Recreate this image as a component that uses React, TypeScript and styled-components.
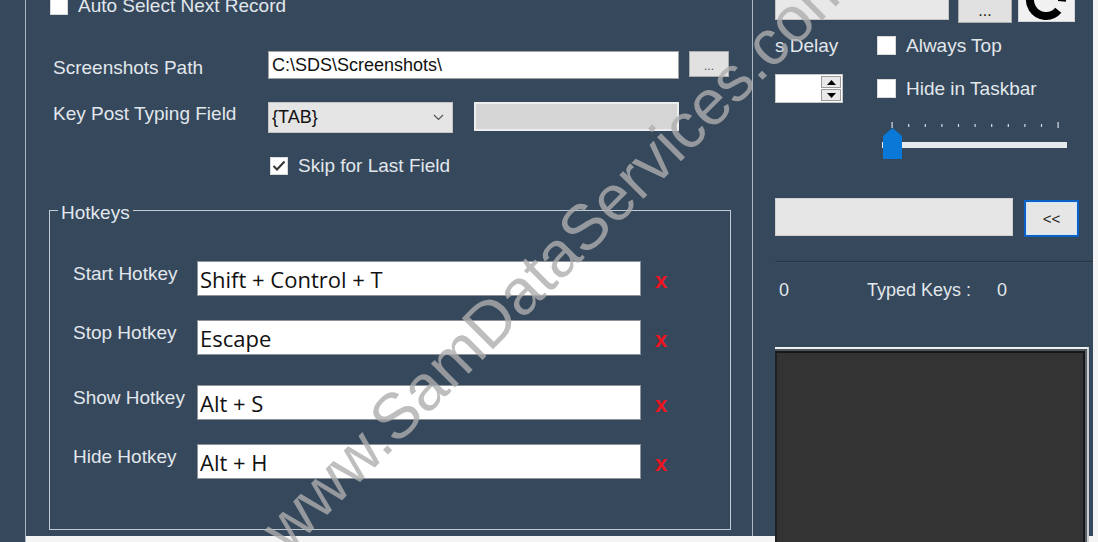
import React from 'react';
import styled, { createGlobalStyle } from 'styled-components';

const SLATE = '#35485c';
const TEXT = '#e2e7ec';

const GlobalStyle = createGlobalStyle`
  html, body { margin: 0; padding: 0; background: #f4f4f4; overflow: hidden; }
  body { width: 1098px; height: 542px; font-family: "Liberation Sans", Arial, sans-serif; }
  #root { width: 1098px; height: 542px; }
  * { box-sizing: border-box; }
`;

const Window = styled.div`
  position: relative;
  display: flex;
  align-items: flex-start;
  width: 1093px;
  height: 542px;
  overflow: hidden;
`;

const LeftStrip = styled.div`
  flex: 0 0 26px;
  height: 542px;
  background: ${SLATE};
  border-right: 1px solid #aab6c2;
`;

const LeftPanel = styled.div`
  flex: 0 0 727px;
  height: 536px;
  background: ${SLATE};
  border-right: 1px solid #aab6c2;
  display: flex;
  flex-direction: column;
  align-items: flex-start;
  & > * { flex-shrink: 0; }
`;

const RightPanel = styled.div`
  flex: 0 0 340px;
  height: 536px;
  background: ${SLATE};
  padding-left: 22px;
  display: flex;
  flex-direction: column;
  align-items: flex-start;
  & > * { flex-shrink: 0; }
`;

const Label = styled.span<{ $size?: number }>`
  font-size: ${p => p.$size ?? 19}px;
  line-height: 22px;
  color: ${TEXT};
  white-space: nowrap;
`;

const CheckRow = styled.div<{ $top: number; $left: number }>`
  display: flex;
  align-items: center;
  gap: 10px;
  height: 18px;
  margin-top: ${p => p.$top}px;
  margin-left: ${p => p.$left}px;
`;

const CheckBox = styled.span<{ $size?: number }>`
  flex: 0 0 auto;
  width: ${p => p.$size ?? 18}px;
  height: ${p => p.$size ?? 18}px;
  background: #ffffff;
  border: 1px solid #d8d8d8;
  display: flex;
  align-items: center;
  justify-content: center;
`;

const FieldRow = styled.div<{ $top: number }>`
  display: flex;
  align-items: flex-start;
  margin-top: ${p => p.$top}px;
  margin-left: 27px;
`;

const FieldLabel = styled(Label)<{ $offset: number }>`
  display: block;
  width: 215px;
  margin-top: ${p => p.$offset}px;
`;

const TextBox = styled.div<{ $w: number; $h: number }>`
  width: ${p => p.$w}px;
  height: ${p => p.$h}px;
  background: #ffffff;
  border: 1px solid #a3a3a3;
  display: flex;
  align-items: center;
  padding-left: 3px;
  font-size: 18px;
  color: #111;
  white-space: nowrap;
`;

const SmallButton = styled.div`
  margin-left: 10px;
  width: 40px;
  height: 26px;
  background: #e1e1e1;
  border: 1px solid #adadad;
  display: flex;
  align-items: flex-end;
  justify-content: center;
  padding-bottom: 4px;
  font-size: 12px;
  line-height: 12px;
  color: #555;
`;

const Combo = styled.div`
  width: 185px;
  height: 31px;
  background: #e5e5e5;
  border: 1px solid #c4c4c4;
  display: flex;
  align-items: center;
  justify-content: space-between;
  padding: 0 8px 0 3px;
  font-size: 18px;
  color: #111;
`;

const DisabledBox = styled.div`
  margin-left: 21px;
  width: 205px;
  height: 29px;
  background: #d5d5d5;
  border: 2px solid #ededed;
`;

const GroupBox = styled.div`
  position: relative;
  margin-top: 35px;
  margin-left: 23px;
  width: 682px;
  height: 320px;
  border: 1px solid #c3ccd5;
  display: flex;
  flex-direction: column;
`;

const Legend = styled.span`
  position: absolute;
  left: 8px;
  top: -9px;
  padding: 0 3px;
  background: ${SLATE};
  font-size: 19px;
  line-height: 22px;
  color: ${TEXT};
`;

const HotkeyRow = styled.div<{ $top: number }>`
  display: flex;
  align-items: flex-start;
  margin-top: ${p => p.$top}px;
  padding-left: 23px;
`;

const HotkeyLabel = styled(Label)`
  display: block;
  width: 124px;
  margin-top: 2px;
`;

const HotkeyInput = styled.div`
  width: 444px;
  height: 35px;
  background: #ffffff;
  border: 1px solid #8e9399;
  display: flex;
  align-items: center;
  padding-left: 2px;
  font-family: "Open Sans", "Noto Sans", sans-serif;
  font-size: 22px;
  color: #111;
  white-space: nowrap;
`;

const XMark = styled.span`
  display: block;
  margin-left: 14px;
  margin-top: 9px;
  font-size: 22px;
  line-height: 22px;
  font-weight: bold;
  color: #ec1420;
`;

/* right panel */
const TopRow = styled.div`
  display: flex;
  align-items: flex-start;
  margin-top: -10px;
  height: 33px;
`;

const TopInput = styled.div`
  width: 174px;
  height: 30px;
  background: #e8e8e8;
  border: 1px solid #c4c4c4;
`;

const DotsButton = styled.div`
  margin-left: 9px;
  width: 54px;
  height: 33px;
  background: #e1e1e1;
  border: 1px solid #adadad;
  display: flex;
  align-items: flex-end;
  justify-content: center;
  padding-bottom: 3px;
  font-size: 16px;
  line-height: 16px;
  color: #222;
`;

const IconButton = styled.div`
  margin-left: 6px;
  width: 57px;
  height: 32px;
  background: #f1f1f1;
  border: 1px solid #d4d4d4;
  display: flex;
`;

const OptionRow = styled.div<{ $top: number; $h: number }>`
  display: flex;
  align-items: center;
  margin-top: ${p => p.$top}px;
  height: ${p => p.$h}px;
`;

const DelayLabel = styled(Label)`
  display: block;
  width: 102px;
`;

const OptionCheck = styled.div<{ $left?: number }>`
  display: flex;
  align-items: center;
  gap: 10px;
  margin-left: ${p => p.$left ?? 0}px;
`;

const NumBox = styled.div`
  width: 68px;
  height: 29px;
  background: #ffffff;
  border: 1px solid #c8c8c8;
  display: flex;
  justify-content: flex-end;
  padding: 1px 1px 1px 0;
`;

const Spinner = styled.div`
  width: 20px;
  display: flex;
  flex-direction: column;
  gap: 1px;
`;

const SpinButton = styled.div`
  flex: 1;
  background: #e8e8e8;
  border: 1px solid #9a9a9a;
  display: flex;
  align-items: center;
  justify-content: center;
`;

const Track = styled.svg`
  display: block;
  margin-top: 17px;
  margin-left: 107px;
`;

const InputRow = styled.div`
  display: flex;
  align-items: flex-start;
  margin-top: 38px;
  height: 39px;
`;

const WideInput = styled.div`
  width: 238px;
  height: 38px;
  background: #e6e6e6;
  border: 1px solid #cfcfcf;
`;

const BackButton = styled.div`
  margin-left: 11px;
  margin-top: 2px;
  width: 55px;
  height: 37px;
  background: #e6e6e6;
  border: 2px solid #0c61c4;
  box-shadow: inset 0 0 0 1px #cfe5f9;
  display: flex;
  align-items: center;
  justify-content: center;
  font-size: 15px;
  color: #222;
`;

const Separator = styled.div`
  margin-top: 24px;
  width: 318px;
  height: 2px;
  border-top: 1px solid #26343f;
  border-bottom: 1px solid #3b4e62;
`;

const StatsRow = styled.div`
  display: flex;
  margin-top: 16px;
  font-size: 18px;
  line-height: 22px;
  color: ${TEXT};
`;

const StatCell = styled.span<{ $w?: number; $pad?: number }>`
  display: block;
  width: ${p => (p.$w ? `${p.$w}px` : 'auto')};
  padding-left: ${p => p.$pad ?? 0}px;
  white-space: nowrap;
`;

const DarkBox = styled.div`
  margin-top: 46px;
  width: 314px;
  height: 200px;
  background: #333333;
  border-top: 2px solid #eef1f4;
  border-right: 2px solid #c8ccd0;
  box-shadow:
    inset 0 2px 0 #4d5359,
    inset -2px 0 0 #5a6168,
    inset 0 4px 0 #15181b,
    inset -4px 0 0 #15181b,
    inset 2px 0 0 #1d2024;
`;

const Watermark = styled.span`
  position: absolute;
  left: 250px;
  top: 516px;
  transform-origin: 0 0;
  transform: rotate(-45deg);
  font-family: "Liberation Sans", Arial, sans-serif;
  font-size: 64px;
  line-height: 64px;
  color: rgba(174, 174, 174, 0.8);
  white-space: nowrap;
  pointer-events: none;
`;

const hotkeys = [
  { label: 'Start Hotkey', value: 'Shift + Control + T', top: 50 },
  { label: 'Stop Hotkey', value: 'Escape', top: 24 },
  { label: 'Show Hotkey', value: 'Alt + S', top: 30 },
  { label: 'Hide Hotkey', value: 'Alt + H', top: 24 },
];

const ticks = Array.from({ length: 11 }, (_, i) => 10 + i * 16.6);

export default function App() {
  return (
    <>
      <GlobalStyle />
      <Window>
        <LeftStrip />
        <LeftPanel>
          <CheckRow $top={-3} $left={24}>
            <CheckBox />
            <Label>Auto Select Next Record</Label>
          </CheckRow>

          <FieldRow $top={36}>
            <FieldLabel $offset={6}>Screenshots Path</FieldLabel>
            <TextBox $w={411} $h={28}>C:\SDS\Screenshots\</TextBox>
            <SmallButton>...</SmallButton>
          </FieldRow>

          <FieldRow $top={23}>
            <FieldLabel $offset={1}>Key Post Typing Field</FieldLabel>
            <Combo>
              <span>{'{TAB}'}</span>
              <svg width="11" height="7" viewBox="0 0 11 7">
                <polyline points="1,1 5.5,5.5 10,1" fill="none" stroke="#555" strokeWidth="1.2" />
              </svg>
            </Combo>
            <DisabledBox />
          </FieldRow>

          <CheckRow $top={24} $left={244}>
            <CheckBox>
              <svg width="16" height="16" viewBox="0 0 16 16">
                <polyline points="2.5,8 6,11.5 13.5,3.5" fill="none" stroke="#333" strokeWidth="2" />
              </svg>
            </CheckBox>
            <Label>Skip for Last Field</Label>
          </CheckRow>

          <GroupBox>
            <Legend>Hotkeys</Legend>
            {hotkeys.map(h => (
              <HotkeyRow key={h.label} $top={h.top}>
                <HotkeyLabel>{h.label}</HotkeyLabel>
                <HotkeyInput>{h.value}</HotkeyInput>
                <XMark>x</XMark>
              </HotkeyRow>
            ))}
          </GroupBox>
        </LeftPanel>

        <RightPanel>
          <TopRow>
            <TopInput />
            <DotsButton>...</DotsButton>
            <IconButton>
              <svg width="55" height="30" viewBox="0 0 55 30">
                <path d="M42.94 10.39 A16 16 0 1 0 39.26 19.28" fill="none" stroke="#000" strokeWidth="8" />
              </svg>
            </IconButton>
          </TopRow>

          <OptionRow $top={13} $h={19}>
            <DelayLabel>s Delay</DelayLabel>
            <OptionCheck>
              <CheckBox $size={19} />
              <Label>Always Top</Label>
            </OptionCheck>
          </OptionRow>

          <OptionRow $top={19} $h={29}>
            <NumBox>
              <Spinner>
                <SpinButton>
                  <svg width="9" height="5" viewBox="0 0 9 5"><polygon points="0,5 4.5,0 9,5" fill="#000" /></svg>
                </SpinButton>
                <SpinButton>
                  <svg width="9" height="5" viewBox="0 0 9 5"><polygon points="0,0 4.5,5 9,0" fill="#000" /></svg>
                </SpinButton>
              </Spinner>
            </NumBox>
            <OptionCheck $left={34}>
              <CheckBox $size={19} />
              <Label>Hide in Taskbar</Label>
            </OptionCheck>
          </OptionRow>

          <Track width="186" height="40" viewBox="0 0 186 40">
            {ticks.map((x, i) => (
              <rect key={i} x={x - 0.5} y={i === 0 || i === 10 ? 2 : 4} width="1.2" height={i === 0 || i === 10 ? 6 : 3} fill="#d8dee4" />
            ))}
            <rect x="0" y="22" width="185" height="6" fill="#e6e9ec" />
            <polygon points="1,16 10.5,8 20,16 20,39 1,39" fill="#0a78d6" />
          </Track>

          <InputRow>
            <WideInput />
            <BackButton>&lt;&lt;</BackButton>
          </InputRow>

          <Separator />

          <StatsRow>
            <StatCell $w={92} $pad={4}>0</StatCell>
            <StatCell $w={130}>Typed Keys :</StatCell>
            <StatCell>0</StatCell>
          </StatsRow>

          <DarkBox />
        </RightPanel>

        <Watermark>www.SamDataServices.com</Watermark>
      </Window>
    </>
  );
}
